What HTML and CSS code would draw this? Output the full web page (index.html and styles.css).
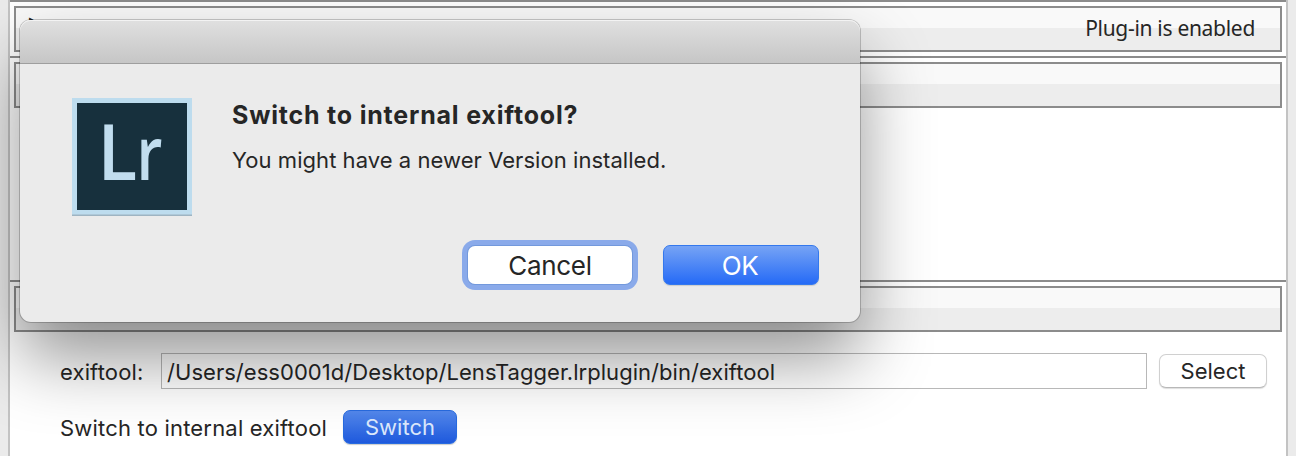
FILE: index.html
```html
<!DOCTYPE html>
<html lang="en">
<head>
<meta charset="utf-8">
<title>Plug-in Manager</title>
<link rel="stylesheet" href="styles.css">
</head>
<body>
<main class="panel">
  <section class="section section-status">
    <header class="section-bar"><span class="marker">▸</span><span class="status">Plug-in is enabled</span></header>
  </section>
  <section class="section section-details">
    <header class="section-bar"></header>
  </section>
  <section class="section section-tool">
    <header class="section-bar"></header>
    <div class="row path-row">
      <label class="label path-label">exiftool:</label>
      <div class="field"><span class="path">/Users/ess0001d/Desktop/LensTagger.lrplugin/bin/exiftool</span></div>
      <button class="button select">Select</button>
    </div>
    <div class="row switch-row">
      <span class="label switch-label">Switch to internal exiftool</span>
      <button class="button switch">Switch</button>
    </div>
  </section>
</main>
<div class="dialog" role="dialog">
  <div class="titlebar"></div>
  <div class="content">
    <svg class="logo" width="120" height="118" viewBox="0 0 120 118">
      <rect y="1" width="120" height="117" fill="#9eb4c2"/>
      <rect width="120" height="116.500" fill="#bddcee"/>
      <rect x="5" y="5" width="110" height="107" fill="#17303d"/>
      <g class="logo-text">
        <text transform="translate(25.400 82) scale(.95 1)">L</text>
        <text transform="translate(64.600 82) scale(.78 .96)">r</text>
      </g>
    </svg>
    <div class="message">
      <h1 class="heading">Switch to internal exiftool?</h1>
      <p class="body">You might have a newer Version installed.</p>
    </div>
  </div>
  <div class="actions">
    <button class="action cancel">Cancel</button>
    <button class="action ok">OK</button>
  </div>
</div>
</body>
</html>
```
FILE: styles.css
```css
* { box-sizing: border-box; }
body {
  margin: 0;
  height: 456px;
  overflow: hidden;
  background: #ebebeb;
  color: #262626;
  font-family: Inter, "Liberation Sans", sans-serif;
}
button { font-family: inherit; padding: 0; }
.panel {
  margin: 0 8px;
  height: 456px;
  background: #fff;
  border: solid #c3c3c3;
  border-width: 0 2px;
}
.section {
  border-top: 2px solid #8c8c8c;
  padding: 4px 4px 0;
}
.section-status { height: 56px; }
.section-details { height: 224px; }
.section-bar {
  height: 46px;
  border: 2px solid #8c8c8c;
  background: linear-gradient(#f9f9f9 0 20px, #ededed 20px);
  display: flex;
  justify-content: space-between;
  padding: 0 25px 0 13px;
}
.marker { font-size: 9px; line-height: 22px; }
.status {
  font: 21px/41px "Noto Sans", sans-serif;
  letter-spacing: -.3px;
}
.row { display: flex; align-items: center; font-size: 22px; }
.label { margin-left: 46px; padding-top: 2px; white-space: nowrap; }
.path-row { margin-top: 21px; height: 36px; }
.path-label { width: 101px; letter-spacing: .15px; }
.field {
  width: 986px;
  height: 36px;
  border: 1px solid #b8b8b8;
  padding-left: 5px;
  line-height: 36px;
  letter-spacing: .04px;
  white-space: nowrap;
}
.button { border-radius: 7px; font-size: 22px; height: 34px; }
.select {
  width: 108px;
  margin-left: 12px;
  background: #fff;
  color: #262626;
  border: 1px solid #d0d0d0;
  border-bottom-color: #b8b8b8;
  box-shadow: 0 1px 1px #0002;
}
.switch-row { margin-top: 21px; height: 34px; }
.switch-label { width: 283px; letter-spacing: .19px; }
.switch {
  width: 114px;
  color: #dce8fc;
  border: 1px solid #286be0;
  background: linear-gradient(#5489ed, #1e59dc);
  box-shadow: 0 1px 1px #0003;
}
.dialog {
  position: absolute;
  left: 20px;
  top: 20px;
  width: 840px;
  height: 302px;
  border-radius: 11px;
  background: #ebebeb;
  box-shadow: 0 0 0 1px #0003, 0 36px 70px rgba(0, 0, 0, .42);
}
.titlebar {
  height: 44px;
  border-radius: 11px 11px 0 0;
  border-bottom: 1px solid #9e9e9e;
  background: linear-gradient(#e0e0e0, #c6c6c6);
  box-shadow: inset 0 1px #f3f3f3;
}
.content { display: flex; padding: 34px 0 0 52px; }
.logo-text {
  font: 600 77px "Open Sans", sans-serif;
  fill: #c1ddef;
}
.message { margin-left: 40px; white-space: nowrap; }
.heading {
  margin: 3px 0 0;
  font-size: 25px;
  line-height: 28px;
  font-weight: 700;
  letter-spacing: .8px;
}
.body { margin: 17px 0 0; font-size: 22px; line-height: 28px; letter-spacing: .05px; }
.actions {
  display: flex;
  gap: 31px;
  padding: 29px 0 0 448px;
}
.action { height: 40px; font-size: 26px; border-radius: 7px; }
.cancel {
  width: 164px;
  border: 0;
  color: #262626;
  background: #fff;
  height: 38px;
  margin-top: 1px;
  padding-top: 1px;
  letter-spacing: -.3px;
  box-shadow: 0 0 0 1px #7399dc, 0 0 0 6px #8aaaea;
}
.ok {
  width: 156px;
  color: #fff;
  padding: 1px 2px 0 0;
  letter-spacing: -.4px;
  border: 1px solid #3478ed;
  background: linear-gradient(#76a3f5, #256af6);
  box-shadow: 0 1px 1px #0002;
}
```
